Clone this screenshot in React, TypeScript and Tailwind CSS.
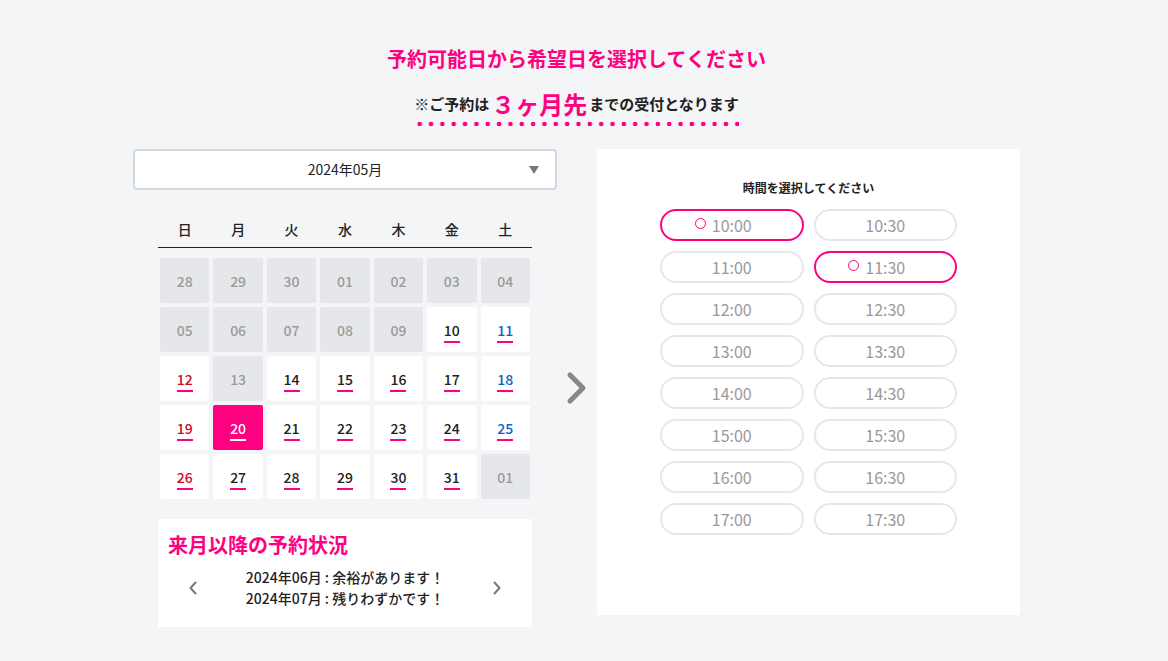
import React from "react";

type Cell = { d: string; kind: "off" | "on" | "sel"; col?: "sun" | "sat" };

const rows: Cell[][] = [
  ["28", "29", "30", "01", "02", "03", "04"].map((d) => ({ d, kind: "off" as const })),
  [
    { d: "05", kind: "off" },
    { d: "06", kind: "off" },
    { d: "07", kind: "off" },
    { d: "08", kind: "off" },
    { d: "09", kind: "off" },
    { d: "10", kind: "on" },
    { d: "11", kind: "on", col: "sat" },
  ],
  [
    { d: "12", kind: "on", col: "sun" },
    { d: "13", kind: "off" },
    { d: "14", kind: "on" },
    { d: "15", kind: "on" },
    { d: "16", kind: "on" },
    { d: "17", kind: "on" },
    { d: "18", kind: "on", col: "sat" },
  ],
  [
    { d: "19", kind: "on", col: "sun" },
    { d: "20", kind: "sel" },
    { d: "21", kind: "on" },
    { d: "22", kind: "on" },
    { d: "23", kind: "on" },
    { d: "24", kind: "on" },
    { d: "25", kind: "on", col: "sat" },
  ],
  [
    { d: "26", kind: "on", col: "sun" },
    { d: "27", kind: "on" },
    { d: "28", kind: "on" },
    { d: "29", kind: "on" },
    { d: "30", kind: "on" },
    { d: "31", kind: "on" },
    { d: "01", kind: "off" },
  ],
];

const times = [
  ["10:00", true],
  ["10:30", false],
  ["11:00", false],
  ["11:30", true],
  ["12:00", false],
  ["12:30", false],
  ["13:00", false],
  ["13:30", false],
  ["14:00", false],
  ["14:30", false],
  ["15:00", false],
  ["15:30", false],
  ["16:00", false],
  ["16:30", false],
  ["17:00", false],
  ["17:30", false],
] as const;

function DayCell({ c }: { c: Cell }) {
  if (c.kind === "off") {
    return (
      <div className="m-[2px] h-[45px] rounded-[2px] bg-[#e6e7eb] flex items-center justify-center text-[14px] font-medium text-[#9a9a9a] leading-[20px]">
        {c.d}
      </div>
    );
  }
  const sel = c.kind === "sel";
  const color = sel
    ? "text-white"
    : c.col === "sun"
    ? "text-[#cc0a1e]"
    : c.col === "sat"
    ? "text-[#0a64c2]"
    : "text-[#222]";
  return (
    <div
      className={`m-[2px] h-[45px] rounded-[2px] flex items-center justify-center ${
        sel ? "bg-[#ff0080]" : "bg-white"
      }`}
    >
      <span className={`relative text-[14px] font-medium leading-[20px] ${color}`}>
        {c.d}
        <span
          className={`absolute left-1/2 -translate-x-1/2 top-full mt-[1px] w-4 h-[2px] ${
            sel ? "bg-white" : "bg-[#ff0080]"
          }`}
        />
      </span>
    </div>
  );
}

export default function App() {
  return (
    <div
      className="min-h-screen w-full bg-[#f4f5f7] text-[#222] pb-10"
      style={{ fontFamily: '"Noto Sans CJK JP", "Noto Sans", sans-serif' }}
    >
      <div className="w-[887px] ml-[133px]">
        <h1 className="pt-[44px] text-center text-[20px] leading-[30px] font-bold text-[#ff0080]">
          予約可能日から希望日を選択してください
        </h1>
        <div className="mt-[15px] flex justify-center">
          <div className="inline-flex flex-col items-stretch">
            <div className="flex items-end justify-center font-bold leading-[30px]">
              <span className="text-[15px]">※ご予約は</span>
              <span className="text-[24px] text-[#ff0080] mx-[2px]">３ヶ月先</span>
              <span className="text-[15px]">までの受付となります</span>
            </div>
            <div className="mt-[2px] h-[6px] bg-[radial-gradient(circle,#ff0080_2px,transparent_2.6px)] bg-[length:11.35px_6px] bg-repeat-x" />
          </div>
        </div>

        <div className="mt-[22px] flex items-stretch">
          {/* left column */}
          <div className="w-[424px]">
            <div className="relative h-[41px] rounded-[4px] border-2 border-[#d3d9e1] bg-white flex items-center justify-center text-[14px]">
              2024年05月
              <span className="absolute right-[16px] top-1/2 -translate-y-1/2 w-0 h-0 border-l-[5px] border-r-[5px] border-t-[8px] border-l-transparent border-r-transparent border-t-[#777]" />
            </div>

            <div className="mx-[25px] mt-[21px]">
              <div className="grid grid-cols-7 h-[37px] items-center border-b border-[#222] text-[14px] font-medium text-center">
                {["日", "月", "火", "水", "木", "金", "土"].map((w) => (
                  <div key={w}>{w}</div>
                ))}
              </div>
              <div className="pt-[8px] grid grid-cols-7">
                {rows.flat().map((c, i) => (
                  <DayCell key={i} c={c} />
                ))}
              </div>
            </div>

            <div className="mx-[25px] mt-[18px] h-[108px] bg-white px-[10px] pt-[12px]">
              <div className="text-[20px] leading-[28px] font-bold text-[#ff0080]">来月以降の予約状況</div>
              <div className="mt-[8px] flex items-center">
                <div className="w-[50px] flex justify-center">
                  <svg width="10" height="16" viewBox="0 0 10 16">
                    <path d="M8 2 L2.5 8 L8 14" fill="none" stroke="#777" strokeWidth="2" />
                  </svg>
                </div>
                <div className="flex-1 text-center text-[14px] font-medium leading-[21px]">
                  <div>2024年06月 : 余裕があります！</div>
                  <div>2024年07月 : 残りわずかです！</div>
                </div>
                <div className="w-[50px] flex justify-center">
                  <svg width="10" height="16" viewBox="0 0 10 16">
                    <path d="M2 2 L7.5 8 L2 14" fill="none" stroke="#777" strokeWidth="2" />
                  </svg>
                </div>
              </div>
            </div>
          </div>

          {/* arrow */}
          <div className="w-[40px] flex items-center justify-center">
            <svg width="22" height="34" viewBox="0 0 22 34">
              <path d="M4 4 L17 17 L4 30" fill="none" stroke="#888" strokeWidth="5" strokeLinecap="round" strokeLinejoin="round" />
            </svg>
          </div>

          {/* right panel */}
          <div className="w-[423px] h-[466px] bg-white pt-[30px]">
            <div className="text-center text-[12px] leading-[18px] font-bold">時間を選択してください</div>
            <div className="mt-[12px] mx-auto w-[297px] grid grid-cols-2 gap-x-[10px] gap-y-[10px]">
              {times.map(([t, on]) => (
                <div
                  key={t}
                  className={`h-[32px] rounded-full border-2 bg-white flex items-center justify-center text-[16px] text-[#999] ${
                    on ? "border-[#ff0080]" : "border-[#e6e7eb]"
                  }`}
                >
                  <span className="relative">
                    {on && (
                      <span className="absolute right-full mr-[6px] top-1/2 -translate-y-[7px] w-[11px] h-[11px] rounded-full border-[1.5px] border-[#ff0080]" />
                    )}
                    {t}
                  </span>
                </div>
              ))}
            </div>
          </div>
        </div>
      </div>
    </div>
  );
}
